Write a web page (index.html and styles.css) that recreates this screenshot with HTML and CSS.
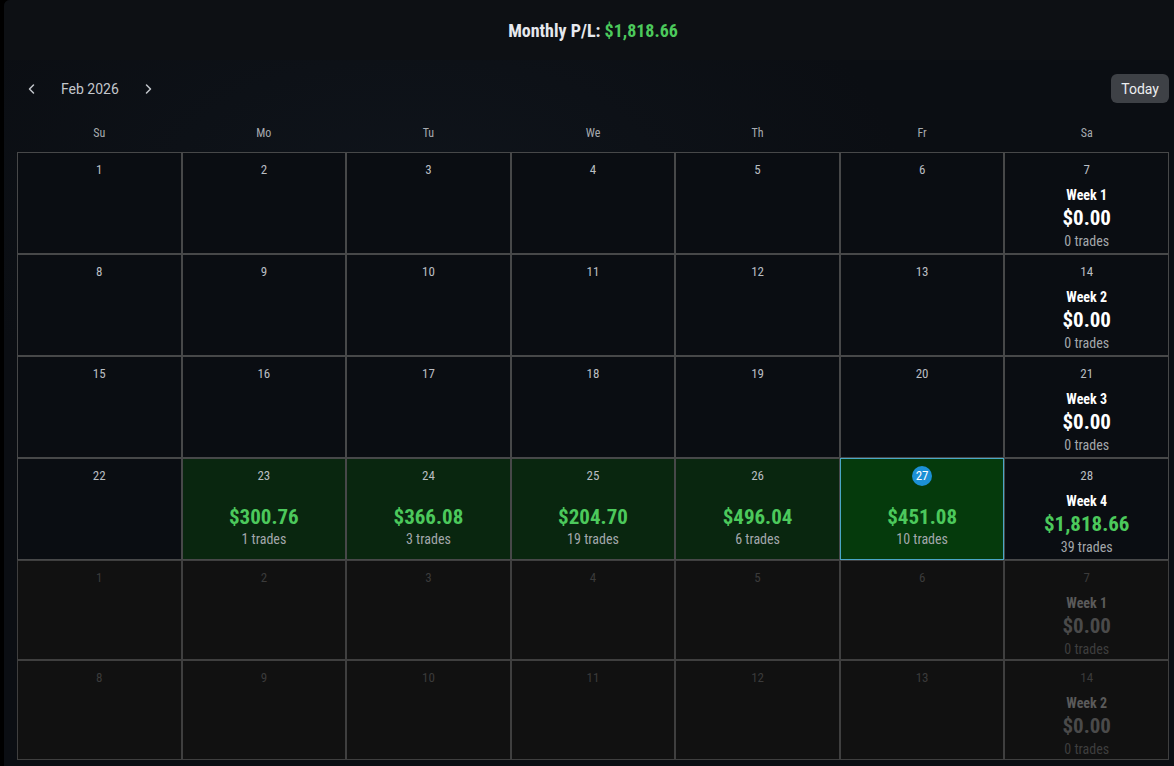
FILE: index.html
```html
<!DOCTYPE html>
<html>
<head>
<meta charset="utf-8">
<link rel="stylesheet" href="styles.css">
</head>
<body>
<div class="app">
  <header class="top">
    <h1 class="title">Monthly P/L: <span class="pos">$1,818.66</span></h1>
  </header>
  <div class="toolbar">
    <div class="nav">
      <button class="arrow" aria-label="Previous month"><svg width="10" height="12" viewBox="0 0 10 12"><path d="M6.5 2 L2.5 6 L6.5 10" fill="none" stroke="#c3c7cc" stroke-width="1.5" stroke-linecap="round" stroke-linejoin="round"/></svg></button>
      <span class="month">Feb 2026</span>
      <button class="arrow" aria-label="Next month"><svg width="10" height="12" viewBox="0 0 10 12"><path d="M3.5 2 L7.5 6 L3.5 10" fill="none" stroke="#c3c7cc" stroke-width="1.5" stroke-linecap="round" stroke-linejoin="round"/></svg></button>
    </div>
    <button class="today-btn">Today</button>
  </div>
  <div class="weekdays">
    <div>Su</div><div>Mo</div><div>Tu</div><div>We</div><div>Th</div><div>Fr</div><div>Sa</div>
  </div>
  <div class="grid">
    <div class="cell"><span class="date">1</span></div>
    <div class="cell"><span class="date">2</span></div>
    <div class="cell"><span class="date">3</span></div>
    <div class="cell"><span class="date">4</span></div>
    <div class="cell"><span class="date">5</span></div>
    <div class="cell"><span class="date">6</span></div>
    <div class="cell week"><span class="date">7</span><span class="wk">Week 1</span><span class="amt">$0.00</span><span class="trades">0 trades</span></div>

    <div class="cell"><span class="date">8</span></div>
    <div class="cell"><span class="date">9</span></div>
    <div class="cell"><span class="date">10</span></div>
    <div class="cell"><span class="date">11</span></div>
    <div class="cell"><span class="date">12</span></div>
    <div class="cell"><span class="date">13</span></div>
    <div class="cell week"><span class="date">14</span><span class="wk">Week 2</span><span class="amt">$0.00</span><span class="trades">0 trades</span></div>

    <div class="cell"><span class="date">15</span></div>
    <div class="cell"><span class="date">16</span></div>
    <div class="cell"><span class="date">17</span></div>
    <div class="cell"><span class="date">18</span></div>
    <div class="cell"><span class="date">19</span></div>
    <div class="cell"><span class="date">20</span></div>
    <div class="cell week"><span class="date">21</span><span class="wk">Week 3</span><span class="amt">$0.00</span><span class="trades">0 trades</span></div>

    <div class="cell"><span class="date">22</span></div>
    <div class="cell profit"><span class="date">23</span><span class="amt pos day-amt">$300.76</span><span class="trades">1 trades</span></div>
    <div class="cell profit"><span class="date">24</span><span class="amt pos day-amt">$366.08</span><span class="trades">3 trades</span></div>
    <div class="cell profit"><span class="date">25</span><span class="amt pos day-amt">$204.70</span><span class="trades">19 trades</span></div>
    <div class="cell profit"><span class="date">26</span><span class="amt pos day-amt">$496.04</span><span class="trades">6 trades</span></div>
    <div class="cell profit today"><span class="date"><span class="badge">27</span></span><span class="amt pos day-amt">$451.08</span><span class="trades">10 trades</span></div>
    <div class="cell week"><span class="date">28</span><span class="wk">Week 4</span><span class="amt pos">$1,818.66</span><span class="trades">39 trades</span></div>

    <div class="cell out"><span class="date">1</span></div>
    <div class="cell out"><span class="date">2</span></div>
    <div class="cell out"><span class="date">3</span></div>
    <div class="cell out"><span class="date">4</span></div>
    <div class="cell out"><span class="date">5</span></div>
    <div class="cell out"><span class="date">6</span></div>
    <div class="cell out week"><span class="date">7</span><span class="wk">Week 1</span><span class="amt">$0.00</span><span class="trades">0 trades</span></div>

    <div class="cell out"><span class="date">8</span></div>
    <div class="cell out"><span class="date">9</span></div>
    <div class="cell out"><span class="date">10</span></div>
    <div class="cell out"><span class="date">11</span></div>
    <div class="cell out"><span class="date">12</span></div>
    <div class="cell out"><span class="date">13</span></div>
    <div class="cell out week"><span class="date">14</span><span class="wk">Week 2</span><span class="amt">$0.00</span><span class="trades">0 trades</span></div>
  </div>
</div>
</body>
</html>
```

FILE: styles.css
```css
* { box-sizing: border-box; }
html, body { margin: 0; padding: 0; }
body {
  background: #000;
  font-family: "Roboto Condensed", Roboto, "Liberation Sans", sans-serif;
  color: #c8ccd1;
  height: 766px;
  overflow: hidden;
}
.app {
  margin-left: 4px;
  height: 766px;
  padding: 0 5px 0 13px;
  background: radial-gradient(ellipse 60% 50% at 35% 25%, #0f141b 0%, #0b0e13 70%);
  border-top-left-radius: 6px;
}
.top {
  height: 60px;
  margin: 0 -5px 0 -13px;
  padding-left: 8px;
  padding-top: 1px;
  background: #0d1014;
  display: flex;
  align-items: center;
  justify-content: center;
  border-top-left-radius: 6px;
}
.title {
  margin: 0;
  font-size: 18px;
  font-weight: 700;
  color: #e6e9ee;
  letter-spacing: 0;
}
.pos { color: #4cc95c; }
.toolbar {
  margin-top: 14px;
  height: 29px;
  display: flex;
  align-items: center;
  justify-content: space-between;
}
.nav {
  display: flex;
  align-items: center;
  gap: 15px;
  padding-left: 1px;
}
.arrow {
  width: 28px;
  height: 28px;
  border: 0;
  padding: 0;
  background: transparent;
  display: flex;
  align-items: center;
  justify-content: center;
}
.month {
  font-family: Roboto, "Liberation Sans", sans-serif;
  font-size: 14px;
  color: #c3c7cc;
}
.today-btn {
  height: 29px;
  padding: 0 10px;
  border: 0;
  border-radius: 6px;
  background: #3e4146;
  color: #eceef0;
  font-family: Roboto, "Liberation Sans", sans-serif;
  font-size: 14px;
}
.weekdays {
  display: grid;
  grid-template-columns: repeat(7, 1fr);
  padding-top: 19px;
  height: 49px;
}
.weekdays div {
  text-align: center;
  font-size: 12px;
  line-height: 22px;
  color: #a7abb0;
}
.grid {
  display: grid;
  grid-template-columns: repeat(7, 1fr);
  grid-template-rows: 102px 102px 102px 102px 100px 100px;
}
.cell {
  border: 1px solid #474849;
  background: #0a0d12;
  display: flex;
  flex-direction: column;
  align-items: center;
  padding-top: 9px;
  overflow: hidden;
}
.date {
  font-size: 13px;
  line-height: 16px;
  height: 16px;
  color: #b9bdc2;
  display: flex;
  align-items: center;
  justify-content: center;
}
.badge {
  width: 20px;
  height: 20px;
  border-radius: 50%;
  background: #1c90d6;
  color: #fff;
  display: flex;
  align-items: center;
  justify-content: center;
  font-size: 13px;
}
.wk {
  margin-top: 8px;
  font-size: 14px;
  font-weight: 700;
  line-height: 18px;
  color: #ffffff;
}
.amt {
  margin-top: 1px;
  font-size: 21px;
  font-weight: 700;
  line-height: 26px;
  color: #ffffff;
}
.amt.pos { color: #4cc95c; }
.day-amt { margin-top: 20px; }
.trades {
  margin-top: 1px;
  font-size: 14px;
  line-height: 18px;
  color: #a3a7ab;
}
.profit { background: #09260f; }
.profit .trades { margin-top: 0; }
.profit.today {
  background: #053a0c;
  border-color: #4aa6c6;
}
.out {
  background: #111111;
  border-color: #3f3f3f;
}
.out .date { color: #3b3b3b; }
.out .wk { color: #5a5a5a; }
.out .amt { color: #4a4a4a; }
.out .trades { color: #3e3e3e; }
```
